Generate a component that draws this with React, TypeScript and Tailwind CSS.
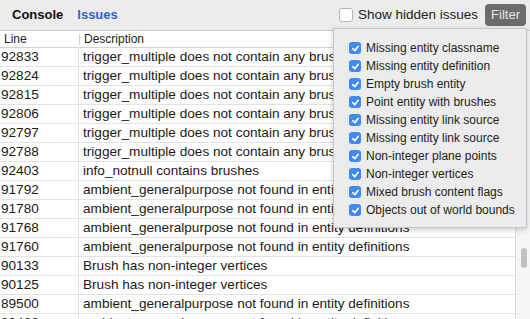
import React from "react";

const rows: [string, string][] = [
  ["92833", "trigger_multiple does not contain any brushes"],
  ["92824", "trigger_multiple does not contain any brushes"],
  ["92815", "trigger_multiple does not contain any brushes"],
  ["92806", "trigger_multiple does not contain any brushes"],
  ["92797", "trigger_multiple does not contain any brushes"],
  ["92788", "trigger_multiple does not contain any brushes"],
  ["92403", "info_notnull contains brushes"],
  ["91792", "ambient_generalpurpose not found in entity definitions"],
  ["91780", "ambient_generalpurpose not found in entity definitions"],
  ["91768", "ambient_generalpurpose not found in entity definitions"],
  ["91760", "ambient_generalpurpose not found in entity definitions"],
  ["90133", "Brush has non-integer vertices"],
  ["90125", "Brush has non-integer vertices"],
  ["89500", "ambient_generalpurpose not found in entity definitions"],
  ["89488", "ambient_generalpurpose not found in entity definitions"],
];

const filters = [
  "Missing entity classname",
  "Missing entity definition",
  "Empty brush entity",
  "Point entity with brushes",
  "Missing entity link source",
  "Missing entity link source",
  "Non-integer plane points",
  "Non-integer vertices",
  "Mixed brush content flags",
  "Objects out of world bounds",
];

const CheckBox = () => (
  <span className="flex h-[12px] w-[12px] shrink-0 items-center justify-center rounded-[3px] bg-[#3d8bf2]">
    <svg width="9" height="9" viewBox="0 0 10 10" fill="none">
      <path
        d="M2 5.2 L4.2 7.4 L8 2.6"
        stroke="white"
        strokeWidth="1.8"
        strokeLinecap="round"
        strokeLinejoin="round"
      />
    </svg>
  </span>
);

export default function App() {
  return (
    <div className="relative h-[319px] w-[530px] overflow-hidden bg-[#ececec] font-['Liberation_Sans',Arial,sans-serif] text-[13px] text-[#1a1a1a]">
      {/* toolbar */}
      <div className="flex h-[31px] items-center border-b border-[#c9c9c9]">
        <span className="ml-[12px] font-bold text-[#111]">Console</span>
        <span className="ml-[14px] font-bold text-[#2f63d1]">Issues</span>
        <div className="ml-auto flex items-center">
          <span className="h-[14px] w-[14px] rounded-[3px] border border-[#b5b5b5] bg-white" />
          <span className="ml-[5px] text-[13.5px] text-[#222]">Show hidden issues</span>
          <span className="ml-[7px] mr-[4px] flex h-[22px] items-center rounded-[4px] bg-[#6c6c6c] px-[6px] text-[#e6e6e6]">
            Filter
          </span>
        </div>
      </div>

      {/* table */}
      <div className="flex h-[288px] bg-white">
        <div className="flex-1 border-r border-[#dcdcdc]">
          <div className="flex h-[17px] items-center border-b border-[#d4d4d4] text-[12px] text-[#222]">
            <span className="w-[79px] pl-[4px]">Line</span>
            <span className="h-[11px] w-px bg-[#d0d0d0]" />
            <span className="pl-[4px]">Description</span>
          </div>
          {rows.map(([line, desc], i) => (
            <div
              key={i}
              className="flex h-[19px] items-center border-b border-[#e3e3e3] whitespace-nowrap text-[13.6px]"
            >
              <span className="h-full w-[79px] border-r border-[#e3e3e3] pl-[1px] leading-[18px]">
                {line}
              </span>
              <span className="pl-[4px]">{desc}</span>
            </div>
          ))}
        </div>
        <div className="relative w-[14px] bg-[#f7f7f7]">
          <div className="absolute left-[5px] top-[217px] h-[20px] w-[6px] rounded-full bg-[#c2c2c2]" />
        </div>
      </div>

      {/* filter popup */}
      <div className="absolute left-[333px] top-[28px] h-[200px] w-[194px] border border-[#c6c6c6] bg-[#ececec] pl-[15px] pt-[10px] shadow-[0_2px_6px_rgba(0,0,0,0.2)]">
        {filters.map((f, i) => (
          <div key={i} className="flex h-[18px] items-center gap-[5px] text-[12px] text-[#222]">
            <CheckBox />
            <span>{f}</span>
          </div>
        ))}
      </div>
    </div>
  );
}
